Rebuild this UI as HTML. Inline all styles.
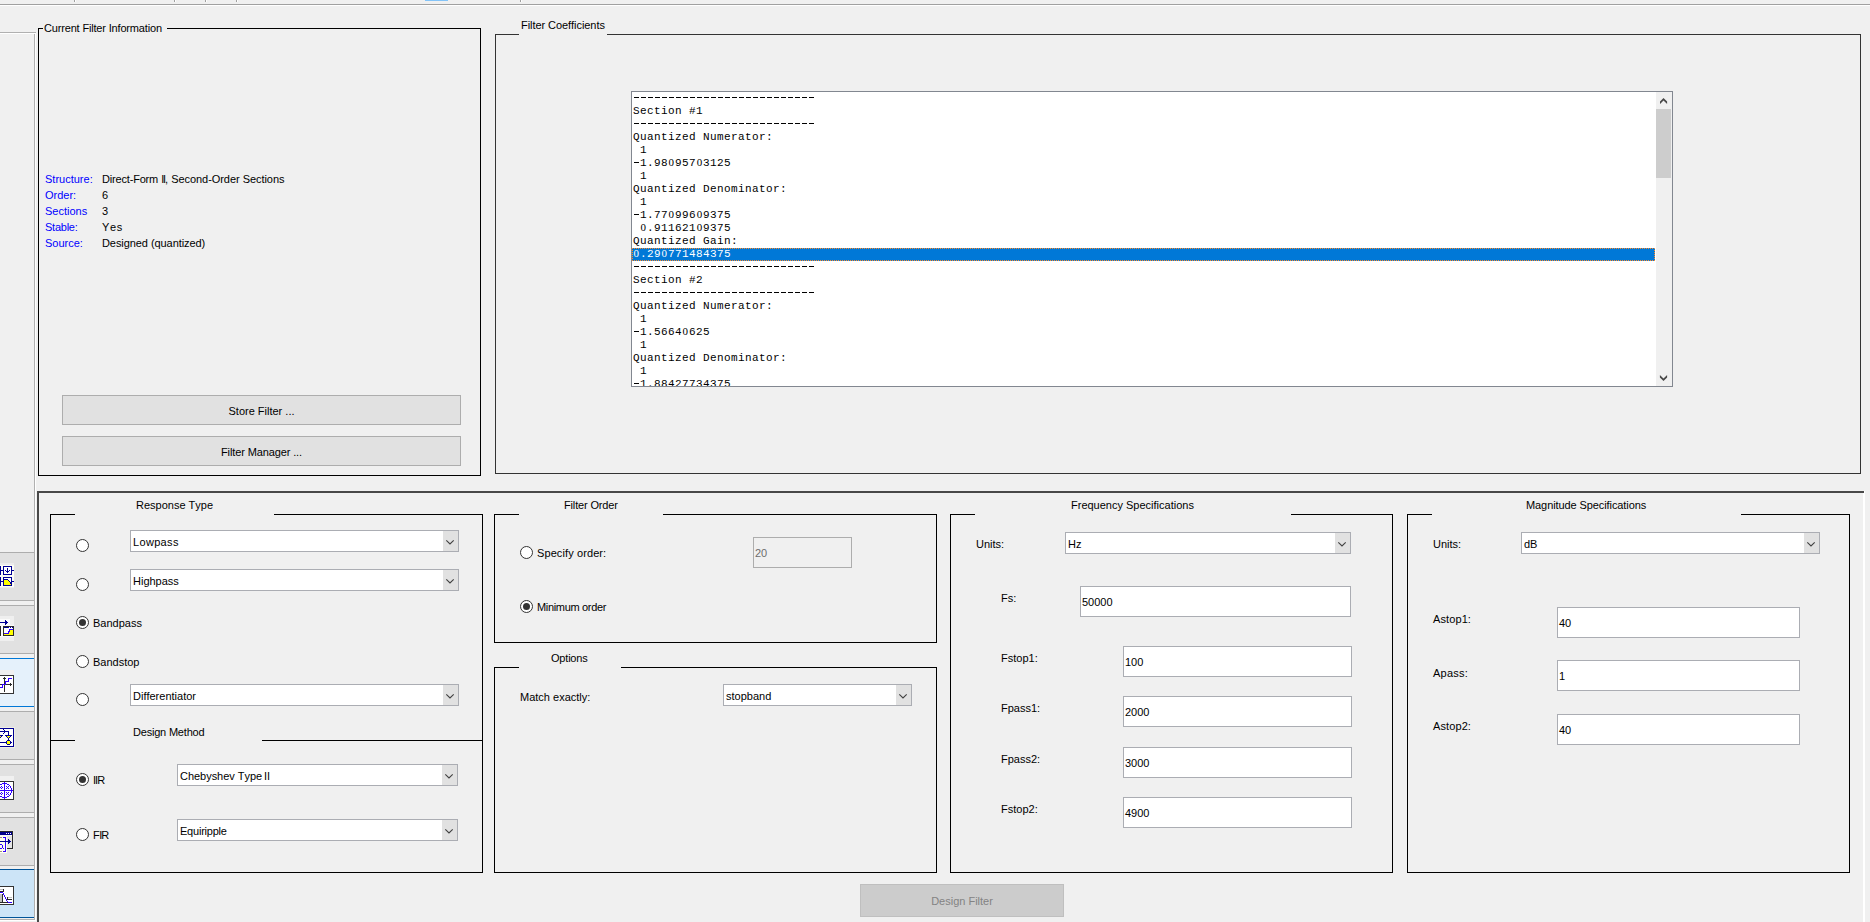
<!DOCTYPE html>
<html><head><meta charset="utf-8"><title>Filter Designer</title>
<style>
html,body{margin:0;padding:0;}
body{font-kerning:none;text-rendering:optimizeSpeed;width:1870px;height:922px;overflow:hidden;background:#f0f0f0;position:relative;font-family:"Liberation Sans",sans-serif;font-size:11px;}
body div, body svg{position:absolute;}
.t{white-space:pre;line-height:13px;height:13px;font-size:11px;}
.b{white-space:pre;font-size:11px;}
.z{font-family:"Liberation Serif",serif;font-size:11px;line-height:0;letter-spacing:0.9px;margin-left:0.6px;}
.m{white-space:pre;font-family:"Liberation Mono",monospace;font-size:11px;letter-spacing:0.4px;line-height:13px;height:13px;}
</style></head><body>
<div style="left:0px;top:4px;width:1870px;height:1px;background:#a0a0a0;"></div>
<div style="left:0px;top:5px;width:1870px;height:1px;background:#ffffff;"></div>
<div style="left:74px;top:0px;width:1px;height:2px;background:#a0a0a0;"></div>
<div style="left:75px;top:0px;width:1px;height:2px;background:#ffffff;"></div>
<div style="left:174px;top:0px;width:1px;height:2px;background:#a0a0a0;"></div>
<div style="left:175px;top:0px;width:1px;height:2px;background:#ffffff;"></div>
<div style="left:205px;top:0px;width:1px;height:2px;background:#a0a0a0;"></div>
<div style="left:206px;top:0px;width:1px;height:2px;background:#ffffff;"></div>
<div style="left:236px;top:0px;width:1px;height:2px;background:#a0a0a0;"></div>
<div style="left:237px;top:0px;width:1px;height:2px;background:#ffffff;"></div>
<div style="left:520px;top:0px;width:1px;height:2px;background:#a0a0a0;"></div>
<div style="left:521px;top:0px;width:1px;height:2px;background:#ffffff;"></div>
<div style="left:425px;top:0px;width:23px;height:1px;background:#84c4f8;"></div>
<div style="left:0px;top:32px;width:36px;height:1px;background:#b0b0b0;"></div>
<div style="left:0px;top:33px;width:36px;height:1px;background:#ffffff;"></div>
<div style="left:-2px;top:552px;width:37px;height:49px;background:#e1e1e1;border:1px solid #adadad;box-sizing:border-box;"></div>
<div style="left:-2px;top:605px;width:37px;height:49px;background:#e1e1e1;border:1px solid #adadad;box-sizing:border-box;"></div>
<div style="left:-2px;top:658px;width:37px;height:49px;background:#e5f1fb;border:1px solid #0078d7;box-sizing:border-box;"></div>
<div style="left:-2px;top:711px;width:37px;height:49px;background:#e1e1e1;border:1px solid #adadad;box-sizing:border-box;"></div>
<div style="left:-2px;top:764px;width:37px;height:49px;background:#e1e1e1;border:1px solid #adadad;box-sizing:border-box;"></div>
<div style="left:-2px;top:817px;width:37px;height:49px;background:#e1e1e1;border:1px solid #adadad;box-sizing:border-box;"></div>
<div style="left:-2px;top:869px;width:37px;height:49px;background:#cce4f7;border:1px solid #005499;box-sizing:border-box;"></div>
<div style="left:34px;top:34px;width:1px;height:886px;background:#b0b0b0;"></div>
<div style="left:35px;top:34px;width:1px;height:887px;background:#ffffff;"></div>
<div style="left:0px;top:919px;width:35px;height:1px;background:#b0b0b0;"></div>
<div style="left:0px;top:920px;width:36px;height:1px;background:#ffffff;"></div>
<svg style="left:0;top:0" width="16" height="922" viewBox="0 0 16 922" shape-rendering="crispEdges"><rect x="0" y="563" width="14" height="25" fill="#ececec"/><rect x="0" y="565" width="14" height="22" fill="#fdfdf6"/><rect x="3" y="566" width="9" height="9" fill="#000094"/><rect x="4" y="567" width="7" height="7" fill="#ffffff"/><rect x="0" y="566" width="1" height="9" fill="#000094"/><rect x="0" y="570" width="3" height="1" fill="#000094"/><rect x="12" y="570" width="2" height="1" fill="#000094"/><rect x="3" y="577" width="9" height="9" fill="#000094"/><rect x="4" y="578" width="7" height="7" fill="#ffffff"/><rect x="0" y="577" width="1" height="9" fill="#000094"/><rect x="0" y="581" width="3" height="1" fill="#000094"/><rect x="12" y="581" width="2" height="1" fill="#000094"/><rect x="7" y="568" width="1" height="5" fill="#000094"/><rect x="5" y="570" width="1" height="1" fill="#000094"/><rect x="9" y="570" width="1" height="1" fill="#000094"/><rect x="6" y="571" width="3" height="1" fill="#000094"/><rect x="4" y="579" width="4" height="1" fill="#000094"/><rect x="8" y="580" width="1" height="1" fill="#000094"/><rect x="9" y="581" width="1" height="1" fill="#000094"/><rect x="10" y="582" width="1" height="1" fill="#000094"/><rect x="10" y="583" width="1" height="1" fill="#000094"/><rect x="4" y="580" width="4" height="1" fill="#ffff00"/><rect x="4" y="581" width="5" height="1" fill="#ffff00"/><rect x="4" y="582" width="6" height="1" fill="#ffff00"/><rect x="4" y="583" width="6" height="1" fill="#ffff00"/><rect x="4" y="584" width="7" height="1" fill="#ffff00"/><rect x="0" y="616" width="14" height="25" fill="#efefef"/><rect x="0" y="619" width="10" height="7" fill="#fbfbfb"/><rect x="0" y="625" width="14" height="12" fill="#fbfbfb"/><rect x="0" y="622" width="8" height="1" fill="#000094"/><rect x="5" y="620" width="1" height="5" fill="#000094"/><rect x="6" y="621" width="1" height="3" fill="#000094"/><rect x="0" y="626" width="1" height="10" fill="#2a2a2a"/><rect x="3" y="626" width="11" height="10" fill="#2a2a2a"/><rect x="4" y="627" width="9" height="8" fill="#ffffff"/><rect x="4" y="627" width="5" height="1" fill="#000094"/><rect x="10" y="627" width="1" height="1" fill="#000094"/><rect x="12" y="627" width="1" height="1" fill="#000094"/><rect x="10" y="629" width="3" height="1" fill="#3000ff"/><rect x="9" y="629" width="1" height="3" fill="#3000ff"/><rect x="8" y="631" width="1" height="3" fill="#3000ff"/><rect x="4" y="633" width="5" height="1" fill="#3000ff"/><rect x="10" y="630" width="3" height="5" fill="#ffff00"/><rect x="9" y="632" width="1" height="3" fill="#ffff00"/><rect x="4" y="634" width="6" height="1" fill="#ffff00"/><rect x="0" y="670" width="14" height="5" fill="#f0f0f0"/><rect x="0" y="675" width="14" height="19" fill="#333333"/><rect x="0" y="676" width="13" height="17" fill="#ffffff"/><rect x="4" y="677" width="1" height="15" fill="#2a2a2a"/><rect x="3" y="678" width="3" height="1" fill="#2a2a2a"/><rect x="0" y="684" width="12" height="1" fill="#2a2a2a"/><rect x="10" y="683" width="1" height="3" fill="#2a2a2a"/><rect x="8" y="678" width="4" height="1" fill="#3000ff"/><rect x="8" y="678" width="1" height="4" fill="#3000ff"/><rect x="5" y="681" width="4" height="1" fill="#3000ff"/><rect x="5" y="681" width="1" height="4" fill="#3000ff"/><rect x="2" y="684" width="4" height="1" fill="#3000ff"/><rect x="2" y="684" width="1" height="4" fill="#3000ff"/><rect x="0" y="687" width="3" height="1" fill="#3000ff"/><rect x="0" y="727" width="15" height="21" fill="#efefe4"/><rect x="0" y="728" width="14" height="19" fill="#000094"/><rect x="0" y="729" width="13" height="17" fill="#ffffff"/><rect x="0" y="731" width="9" height="1" fill="#000094"/><rect x="8" y="731" width="1" height="5" fill="#000094"/><rect x="3" y="729" width="1" height="1" fill="#000094"/><rect x="4" y="730" width="1" height="3" fill="#000094"/><rect x="3" y="733" width="1" height="1" fill="#000094"/><rect x="5" y="735" width="7" height="1" fill="#000094"/><rect x="6" y="736" width="5" height="1" fill="#000094"/><rect x="7" y="737" width="3" height="1" fill="#000094"/><rect x="8" y="738" width="1" height="3" fill="#000094"/><rect x="7" y="736" width="3" height="1" fill="#ffff00"/><rect x="8" y="737" width="1" height="1" fill="#ffff00"/><rect x="7" y="740" width="3" height="1" fill="#000094"/><rect x="7" y="744" width="3" height="1" fill="#000094"/><rect x="6" y="741" width="1" height="3" fill="#000094"/><rect x="10" y="741" width="1" height="3" fill="#000094"/><rect x="11" y="742" width="1" height="1" fill="#000094"/><rect x="7" y="741" width="3" height="3" fill="#ffff00"/><rect x="0" y="742" width="6" height="1" fill="#000094"/><rect x="0" y="735" width="3" height="1" fill="#000094"/><rect x="0" y="736" width="2" height="1" fill="#000094"/><rect x="0" y="737" width="1" height="1" fill="#000094"/><rect x="0" y="736" width="1" height="1" fill="#ffff00"/><rect x="0" y="776" width="14" height="5" fill="#f0f0f0"/><rect x="0" y="781" width="14" height="19" fill="#333333"/><rect x="0" y="782" width="13" height="17" fill="#ffffff"/><rect x="4" y="782" width="1" height="17" fill="#3000ff"/><rect x="0" y="790" width="13" height="1" fill="#3000ff"/><rect x="5" y="783" width="1" height="1" fill="#3000ff"/><rect x="5" y="797" width="1" height="1" fill="#3000ff"/><rect x="3" y="783" width="1" height="1" fill="#3000ff"/><rect x="3" y="797" width="1" height="1" fill="#3000ff"/><rect x="6" y="783" width="1" height="1" fill="#3000ff"/><rect x="6" y="797" width="1" height="1" fill="#3000ff"/><rect x="2" y="783" width="1" height="1" fill="#3000ff"/><rect x="2" y="797" width="1" height="1" fill="#3000ff"/><rect x="7" y="784" width="1" height="1" fill="#3000ff"/><rect x="7" y="796" width="1" height="1" fill="#3000ff"/><rect x="1" y="784" width="1" height="1" fill="#3000ff"/><rect x="1" y="796" width="1" height="1" fill="#3000ff"/><rect x="8" y="784" width="1" height="1" fill="#3000ff"/><rect x="8" y="796" width="1" height="1" fill="#3000ff"/><rect x="0" y="784" width="1" height="1" fill="#3000ff"/><rect x="0" y="796" width="1" height="1" fill="#3000ff"/><rect x="9" y="785" width="1" height="1" fill="#3000ff"/><rect x="9" y="795" width="1" height="1" fill="#3000ff"/><rect x="10" y="786" width="1" height="1" fill="#3000ff"/><rect x="10" y="794" width="1" height="1" fill="#3000ff"/><rect x="10" y="787" width="1" height="1" fill="#3000ff"/><rect x="10" y="793" width="1" height="1" fill="#3000ff"/><rect x="11" y="788" width="1" height="1" fill="#3000ff"/><rect x="11" y="792" width="1" height="1" fill="#3000ff"/><rect x="11" y="789" width="1" height="1" fill="#3000ff"/><rect x="11" y="791" width="1" height="1" fill="#3000ff"/><rect x="6" y="786" width="1" height="1" fill="#3000ff"/><rect x="8" y="786" width="1" height="1" fill="#3000ff"/><rect x="7" y="787" width="1" height="1" fill="#3000ff"/><rect x="6" y="788" width="1" height="1" fill="#3000ff"/><rect x="8" y="788" width="1" height="1" fill="#3000ff"/><rect x="1" y="786" width="1" height="1" fill="#3000ff"/><rect x="0" y="787" width="1" height="1" fill="#3000ff"/><rect x="2" y="787" width="1" height="1" fill="#3000ff"/><rect x="1" y="788" width="1" height="1" fill="#3000ff"/><rect x="6" y="792" width="1" height="1" fill="#3000ff"/><rect x="8" y="792" width="1" height="1" fill="#3000ff"/><rect x="7" y="793" width="1" height="1" fill="#3000ff"/><rect x="6" y="794" width="1" height="1" fill="#3000ff"/><rect x="8" y="794" width="1" height="1" fill="#3000ff"/><rect x="1" y="792" width="1" height="1" fill="#3000ff"/><rect x="0" y="793" width="1" height="1" fill="#3000ff"/><rect x="2" y="793" width="1" height="1" fill="#3000ff"/><rect x="1" y="794" width="1" height="1" fill="#3000ff"/><rect x="0" y="830" width="14" height="20" fill="#e8e8e8"/><rect x="0" y="831" width="13" height="18" fill="#2a2a2a"/><rect x="0" y="832" width="12" height="16" fill="#e4e4e4"/><rect x="0" y="832" width="12" height="3" fill="#00008b"/><rect x="6" y="833" width="1" height="1" fill="#ffffff"/><rect x="8" y="833" width="1" height="1" fill="#ffffff"/><rect x="10" y="833" width="1" height="1" fill="#ffffff"/><rect x="0" y="835" width="12" height="1" fill="#f8f8f8"/><rect x="0" y="836" width="7" height="17" fill="#fffff0"/><rect x="3" y="837" width="3" height="1" fill="#3000ff"/><rect x="5" y="837" width="1" height="15" fill="#3000ff"/><rect x="3" y="851" width="3" height="1" fill="#3000ff"/><rect x="0" y="837" width="2" height="1" fill="#a09080"/><rect x="0" y="851" width="2" height="1" fill="#a09080"/><rect x="0" y="841" width="10" height="1" fill="#00008b"/><rect x="8" y="839" width="1" height="5" fill="#00008b"/><rect x="9" y="840" width="1" height="3" fill="#00008b"/><rect x="10" y="841" width="1" height="1" fill="#00008b"/><rect x="0" y="844" width="2" height="1" fill="#3000ff"/><rect x="2" y="845" width="1" height="3" fill="#3000ff"/><rect x="0" y="848" width="2" height="1" fill="#3000ff"/><rect x="3" y="848" width="1" height="1" fill="#3000ff"/><rect x="0" y="886" width="14" height="19" fill="#333333"/><rect x="0" y="887" width="13" height="17" fill="#ffffff"/><rect x="0" y="889" width="3" height="1" fill="#c0c0c0"/><rect x="3" y="889" width="1" height="3" fill="#2a2a2a"/><rect x="0" y="891" width="4" height="1" fill="#2a2a2a"/><rect x="0" y="892" width="3" height="1" fill="#3000ff"/><rect x="3" y="893" width="1" height="1" fill="#3000ff"/><rect x="3" y="894" width="1" height="1" fill="#3000ff"/><rect x="4" y="895" width="1" height="1" fill="#3000ff"/><rect x="4" y="896" width="1" height="1" fill="#3000ff"/><rect x="5" y="897" width="1" height="1" fill="#3000ff"/><rect x="5" y="898" width="1" height="1" fill="#3000ff"/><rect x="6" y="899" width="1" height="1" fill="#3000ff"/><rect x="6" y="900" width="1" height="1" fill="#3000ff"/><rect x="7" y="901" width="1" height="1" fill="#3000ff"/><rect x="0" y="894" width="2" height="8" fill="#c0c0c0"/><rect x="2" y="894" width="1" height="9" fill="#2a2a2a"/><rect x="0" y="902" width="8" height="1" fill="#2a2a2a"/><rect x="8" y="902" width="4" height="1" fill="#3000ff"/><rect x="8" y="897" width="4" height="1" fill="#c0c0c0"/><rect x="7" y="897" width="1" height="3" fill="#2a2a2a"/><rect x="7" y="899" width="5" height="1" fill="#2a2a2a"/></svg>
<div style="left:38px;top:28px;width:5px;height:1px;background:#000;"></div>
<div style="left:167px;top:28px;width:314px;height:1px;background:#000;"></div>
<div style="left:38px;top:475px;width:443px;height:1px;background:#000;"></div>
<div style="left:38px;top:28px;width:1px;height:448px;background:#000;"></div>
<div style="left:480px;top:28px;width:1px;height:448px;background:#000;"></div>
<div class="t" style="left:44px;top:22px;color:#000;letter-spacing:-0.17px;">Current Filter Information</div>
<div class="t" style="left:45px;top:173px;color:#0000ff;">Structure:</div>
<div class="t" style="left:102px;top:173px;color:#000;"><span style="letter-spacing:-0.18px">Direct-Form</span> <span style="letter-spacing:-1.1px">II</span>,<span style="letter-spacing:-0.05px"> Second-Order Sections</span></div>
<div class="t" style="left:45px;top:189px;color:#0000ff;">Order:</div>
<div class="t" style="left:102px;top:189px;color:#000;">6</div>
<div class="t" style="left:45px;top:205px;color:#0000ff;">Sections</div>
<div class="t" style="left:102px;top:205px;color:#000;">3</div>
<div class="t" style="left:45px;top:221px;color:#0000ff;"><span style="letter-spacing:-0.25px">Stable:</span></div>
<div class="t" style="left:102px;top:221px;color:#000;"><span style="letter-spacing:0.6px">Yes</span></div>
<div class="t" style="left:45px;top:237px;color:#0000ff;">Source:</div>
<div class="t" style="left:102px;top:237px;color:#000;"><span style="letter-spacing:-0.07px">Designed (quantized)</span></div>
<div class="b" style="left:62px;top:395px;width:399px;height:30px;background:#e1e1e1;border:1px solid #adadad;box-sizing:border-box;color:#000;text-align:center;line-height:30px;">Store Filter ...</div>
<div class="b" style="left:62px;top:436px;width:399px;height:30px;background:#e1e1e1;border:1px solid #adadad;box-sizing:border-box;color:#000;text-align:center;line-height:30px;letter-spacing:-0.12px;">Filter Manager ...</div>
<div style="left:495px;top:34px;width:24px;height:1px;background:#333;"></div>
<div style="left:607px;top:34px;width:1254px;height:1px;background:#333;"></div>
<div style="left:495px;top:473px;width:1366px;height:1px;background:#333;"></div>
<div style="left:495px;top:34px;width:1px;height:440px;background:#333;"></div>
<div style="left:1860px;top:34px;width:1px;height:440px;background:#333;"></div>
<div class="t" style="left:521px;top:19px;color:#000;letter-spacing:-0.06px;">Filter Coefficients</div>
<div style="left:631px;top:91px;width:1042px;height:296px;background:#fff;border:1px solid #828790;box-sizing:border-box;"></div>
<div style="left:632px;top:92px;width:1024px;height:294px;overflow:hidden;">
<div style="left:1px;top:5px;width:182px;height:1px;background:repeating-linear-gradient(90deg,rgba(0,0,0,0) 0,rgba(0,0,0,0) 0.7px,#000 0.7px,#000 6.3px,rgba(0,0,0,0) 6.3px,rgba(0,0,0,0) 7px);"></div>
<div class="m" style="left:1px;top:13px;">Section #1</div>
<div style="left:1px;top:31px;width:182px;height:1px;background:repeating-linear-gradient(90deg,rgba(0,0,0,0) 0,rgba(0,0,0,0) 0.7px,#000 0.7px,#000 6.3px,rgba(0,0,0,0) 6.3px,rgba(0,0,0,0) 7px);"></div>
<div class="m" style="left:1px;top:39px;">Quantized Numerator:</div>
<div class="m" style="left:1px;top:52px;"> 1</div>
<div style="left:1.7px;top:70px;width:5.6px;height:1px;background:#000;"></div>
<div class="m" style="left:1px;top:65px;"> 1.98<span class="z">0</span>957<span class="z">0</span>3125</div>
<div class="m" style="left:1px;top:78px;"> 1</div>
<div class="m" style="left:1px;top:91px;">Quantized Denominator:</div>
<div class="m" style="left:1px;top:104px;"> 1</div>
<div style="left:1.7px;top:122px;width:5.6px;height:1px;background:#000;"></div>
<div class="m" style="left:1px;top:117px;"> 1.77<span class="z">0</span>996<span class="z">0</span>9375</div>
<div class="m" style="left:1px;top:130px;"> <span class="z">0</span>.911621<span class="z">0</span>9375</div>
<div class="m" style="left:1px;top:143px;">Quantized Gain:</div>
<div style="left:0;top:156px;width:1023px;height:13px;background:#0078d7;"></div>
<div style="left:0;top:156px;width:1023px;height:13px;box-sizing:border-box;border:1px dotted #ff8a28;"></div>
<div class="m" style="left:1px;top:156px;color:#fff;"><span class="z">0</span>.29<span class="z">0</span>771484375</div>
<div style="left:1px;top:174px;width:182px;height:1px;background:repeating-linear-gradient(90deg,rgba(0,0,0,0) 0,rgba(0,0,0,0) 0.7px,#000 0.7px,#000 6.3px,rgba(0,0,0,0) 6.3px,rgba(0,0,0,0) 7px);"></div>
<div class="m" style="left:1px;top:182px;">Section #2</div>
<div style="left:1px;top:200px;width:182px;height:1px;background:repeating-linear-gradient(90deg,rgba(0,0,0,0) 0,rgba(0,0,0,0) 0.7px,#000 0.7px,#000 6.3px,rgba(0,0,0,0) 6.3px,rgba(0,0,0,0) 7px);"></div>
<div class="m" style="left:1px;top:208px;">Quantized Numerator:</div>
<div class="m" style="left:1px;top:221px;"> 1</div>
<div style="left:1.7px;top:239px;width:5.6px;height:1px;background:#000;"></div>
<div class="m" style="left:1px;top:234px;"> 1.5664<span class="z">0</span>625</div>
<div class="m" style="left:1px;top:247px;"> 1</div>
<div class="m" style="left:1px;top:260px;">Quantized Denominator:</div>
<div class="m" style="left:1px;top:273px;"> 1</div>
<div style="left:1.7px;top:291px;width:5.6px;height:1px;background:#000;"></div>
<div class="m" style="left:1px;top:286px;"> 1.88427734375</div>
</div>
<div style="left:1656px;top:92px;width:16px;height:294px;background:#f0f0f0;"></div>
<div style="left:1656px;top:109px;width:15px;height:69px;background:#cdcdcd;"></div>
<svg style="left:1656px;top:92px" width="16" height="20" viewBox="0 0 16 20"><path d="M4 9.4 L7.5 5.9 L11.1 9.4 L11.1 12 L7.5 8.5 L4 12 Z" fill="#484848"/></svg>
<svg style="left:1656px;top:368px" width="16" height="18" viewBox="0 0 16 18"><path d="M3.9 6.9 L7.5 10.5 L11.1 6.9 L11.1 9.5 L7.5 13.1 L3.9 9.5 Z" fill="#484848"/></svg>
<div style="left:37px;top:491px;width:1827px;height:2px;background:#484848;"></div>
<div style="left:1864px;top:491px;width:1px;height:431px;background:#ffffff;"></div>
<div style="left:37px;top:491px;width:2px;height:431px;background:#484848;"></div>
<div style="left:1863px;top:493px;width:2px;height:429px;background:#ffffff;"></div>
<div style="left:50px;top:514px;width:25px;height:1px;background:#000;"></div>
<div style="left:274px;top:514px;width:209px;height:1px;background:#000;"></div>
<div style="left:50px;top:872px;width:433px;height:1px;background:#000;"></div>
<div style="left:50px;top:514px;width:1px;height:359px;background:#000;"></div>
<div style="left:482px;top:514px;width:1px;height:359px;background:#000;"></div>
<div class="t" style="left:136px;top:499px;color:#000;">Response Type</div>
<svg style="left:76.0px;top:539.0px" width="13" height="13" viewBox="0 0 13 13"><circle cx="6.5" cy="6.5" r="6" fill="#fff" stroke="#333" stroke-width="1"/></svg>
<svg style="left:76.0px;top:578.0px" width="13" height="13" viewBox="0 0 13 13"><circle cx="6.5" cy="6.5" r="6" fill="#fff" stroke="#333" stroke-width="1"/></svg>
<svg style="left:76.0px;top:693.0px" width="13" height="13" viewBox="0 0 13 13"><circle cx="6.5" cy="6.5" r="6" fill="#fff" stroke="#333" stroke-width="1"/></svg>
<svg style="left:76.0px;top:616.0px" width="13" height="13" viewBox="0 0 13 13"><circle cx="6.5" cy="6.5" r="6" fill="#fff" stroke="#333" stroke-width="1"/><circle cx="6.5" cy="6.5" r="3.5" fill="#333"/></svg>
<svg style="left:76.0px;top:655.0px" width="13" height="13" viewBox="0 0 13 13"><circle cx="6.5" cy="6.5" r="6" fill="#fff" stroke="#333" stroke-width="1"/></svg>
<div class="t" style="left:93px;top:617px;color:#000;">Bandpass</div>
<div class="t" style="left:93px;top:656px;color:#000;">Bandstop</div>
<div style="left:130px;top:530px;width:329px;height:22px;background:#fff;border:1px solid #abadb3;box-sizing:border-box;"></div>
<div style="left:443px;top:531px;width:15px;height:20px;background:#e1e1e1;"></div>
<svg style="left:445px;top:537.5px" width="10" height="8" viewBox="0 0 10 8"><path d="M1.3 2.4 L5 6.0 L8.7 2.4" fill="none" stroke="#404040" stroke-width="1.1"/></svg>
<div class="t" style="left:133px;top:536px;color:#000;letter-spacing:0.33px;">Lowpass</div>
<div style="left:130px;top:569px;width:329px;height:22px;background:#fff;border:1px solid #abadb3;box-sizing:border-box;"></div>
<div style="left:443px;top:570px;width:15px;height:20px;background:#e1e1e1;"></div>
<svg style="left:445px;top:576.5px" width="10" height="8" viewBox="0 0 10 8"><path d="M1.3 2.4 L5 6.0 L8.7 2.4" fill="none" stroke="#404040" stroke-width="1.1"/></svg>
<div class="t" style="left:133px;top:575px;color:#000;">Highpass</div>
<div style="left:130px;top:684px;width:329px;height:22px;background:#fff;border:1px solid #abadb3;box-sizing:border-box;"></div>
<div style="left:443px;top:685px;width:15px;height:20px;background:#e1e1e1;"></div>
<svg style="left:445px;top:691.5px" width="10" height="8" viewBox="0 0 10 8"><path d="M1.3 2.4 L5 6.0 L8.7 2.4" fill="none" stroke="#404040" stroke-width="1.1"/></svg>
<div class="t" style="left:133px;top:690px;color:#000;">Differentiator</div>
<div style="left:50px;top:740px;width:25px;height:1px;background:#000;"></div>
<div style="left:262px;top:740px;width:221px;height:1px;background:#000;"></div>
<div class="t" style="left:133px;top:726px;color:#000;letter-spacing:-0.2px;">Design Method</div>
<svg style="left:76.0px;top:773.0px" width="13" height="13" viewBox="0 0 13 13"><circle cx="6.5" cy="6.5" r="6" fill="#fff" stroke="#333" stroke-width="1"/><circle cx="6.5" cy="6.5" r="3.5" fill="#333"/></svg>
<svg style="left:76.0px;top:828.0px" width="13" height="13" viewBox="0 0 13 13"><circle cx="6.5" cy="6.5" r="6" fill="#fff" stroke="#333" stroke-width="1"/></svg>
<div class="t" style="left:93px;top:774px;color:#000;"><span style="letter-spacing:-1px">II</span>R</div>
<div class="t" style="left:93px;top:829px;color:#000;letter-spacing:-0.5px;">F<span style="letter-spacing:-1px">I</span>R</div>
<div style="left:177px;top:764px;width:281px;height:22px;background:#fff;border:1px solid #abadb3;box-sizing:border-box;"></div>
<div style="left:442px;top:765px;width:15px;height:20px;background:#e1e1e1;"></div>
<svg style="left:444px;top:771.5px" width="10" height="8" viewBox="0 0 10 8"><path d="M1.3 2.4 L5 6.0 L8.7 2.4" fill="none" stroke="#404040" stroke-width="1.1"/></svg>
<div class="t" style="left:180px;top:770px;color:#000;letter-spacing:-0.03px;">Chebyshev Type<span style="letter-spacing:-1.2px"> </span>II</div>
<div style="left:177px;top:819px;width:281px;height:22px;background:#fff;border:1px solid #abadb3;box-sizing:border-box;"></div>
<div style="left:442px;top:820px;width:15px;height:20px;background:#e1e1e1;"></div>
<svg style="left:444px;top:826.5px" width="10" height="8" viewBox="0 0 10 8"><path d="M1.3 2.4 L5 6.0 L8.7 2.4" fill="none" stroke="#404040" stroke-width="1.1"/></svg>
<div class="t" style="left:180px;top:825px;color:#000;letter-spacing:-0.22px;">Equiripple</div>
<div style="left:494px;top:514px;width:25px;height:1px;background:#000;"></div>
<div style="left:663px;top:514px;width:274px;height:1px;background:#000;"></div>
<div style="left:494px;top:642px;width:443px;height:1px;background:#000;"></div>
<div style="left:494px;top:514px;width:1px;height:129px;background:#000;"></div>
<div style="left:936px;top:514px;width:1px;height:129px;background:#000;"></div>
<div class="t" style="left:564px;top:499px;color:#000;letter-spacing:-0.15px;">Filter Order</div>
<svg style="left:520.0px;top:546.0px" width="13" height="13" viewBox="0 0 13 13"><circle cx="6.5" cy="6.5" r="6" fill="#fff" stroke="#333" stroke-width="1"/></svg>
<svg style="left:520.0px;top:600.0px" width="13" height="13" viewBox="0 0 13 13"><circle cx="6.5" cy="6.5" r="6" fill="#fff" stroke="#333" stroke-width="1"/><circle cx="6.5" cy="6.5" r="3.5" fill="#333"/></svg>
<div class="t" style="left:537px;top:547px;color:#000;letter-spacing:0.1px;">Specify order:</div>
<div class="t" style="left:537px;top:601px;color:#000;letter-spacing:-0.33px;">Minimum order</div>
<div style="left:753px;top:537px;width:99px;height:31px;background:#f0f0f0;border:1px solid #adadad;box-sizing:border-box;"></div>
<div class="t" style="left:755px;top:547px;color:#6d6d6d;">20</div>
<div style="left:494px;top:667px;width:25px;height:1px;background:#000;"></div>
<div style="left:621px;top:667px;width:316px;height:1px;background:#000;"></div>
<div style="left:494px;top:872px;width:443px;height:1px;background:#000;"></div>
<div style="left:494px;top:667px;width:1px;height:206px;background:#000;"></div>
<div style="left:936px;top:667px;width:1px;height:206px;background:#000;"></div>
<div class="t" style="left:551px;top:652px;color:#000;letter-spacing:-0.2px;">Options</div>
<div class="t" style="left:520px;top:691px;color:#000;">Match exactly:</div>
<div style="left:723px;top:684px;width:189px;height:22px;background:#fff;border:1px solid #abadb3;box-sizing:border-box;"></div>
<div style="left:896px;top:685px;width:15px;height:20px;background:#e1e1e1;"></div>
<svg style="left:898px;top:691.5px" width="10" height="8" viewBox="0 0 10 8"><path d="M1.3 2.4 L5 6.0 L8.7 2.4" fill="none" stroke="#404040" stroke-width="1.1"/></svg>
<div class="t" style="left:726px;top:690px;color:#000;">stopband</div>
<div style="left:950px;top:514px;width:25px;height:1px;background:#000;"></div>
<div style="left:1291px;top:514px;width:102px;height:1px;background:#000;"></div>
<div style="left:950px;top:872px;width:443px;height:1px;background:#000;"></div>
<div style="left:950px;top:514px;width:1px;height:359px;background:#000;"></div>
<div style="left:1392px;top:514px;width:1px;height:359px;background:#000;"></div>
<div class="t" style="left:1071px;top:499px;color:#000;">Frequency Specifications</div>
<div class="t" style="left:976px;top:538px;color:#000;">Units:</div>
<div style="left:1065px;top:532px;width:286px;height:22px;background:#fff;border:1px solid #abadb3;box-sizing:border-box;"></div>
<div style="left:1335px;top:533px;width:15px;height:20px;background:#e1e1e1;"></div>
<svg style="left:1337px;top:539.5px" width="10" height="8" viewBox="0 0 10 8"><path d="M1.3 2.4 L5 6.0 L8.7 2.4" fill="none" stroke="#404040" stroke-width="1.1"/></svg>
<div class="t" style="left:1068px;top:538px;color:#000;">Hz</div>
<div class="t" style="left:1001px;top:592px;color:#000;">Fs:</div>
<div style="left:1080px;top:586px;width:271px;height:31px;background:#fff;border:1px solid #abadb3;box-sizing:border-box;"></div>
<div class="t" style="left:1082px;top:596px;color:#000;">50000</div>
<div class="t" style="left:1001px;top:652px;color:#000;">Fstop1:</div>
<div style="left:1123px;top:646px;width:229px;height:31px;background:#fff;border:1px solid #abadb3;box-sizing:border-box;"></div>
<div class="t" style="left:1125px;top:656px;color:#000;">100</div>
<div class="t" style="left:1001px;top:702px;color:#000;">Fpass1:</div>
<div style="left:1123px;top:696px;width:229px;height:31px;background:#fff;border:1px solid #abadb3;box-sizing:border-box;"></div>
<div class="t" style="left:1125px;top:706px;color:#000;">2000</div>
<div class="t" style="left:1001px;top:753px;color:#000;">Fpass2:</div>
<div style="left:1123px;top:747px;width:229px;height:31px;background:#fff;border:1px solid #abadb3;box-sizing:border-box;"></div>
<div class="t" style="left:1125px;top:757px;color:#000;">3000</div>
<div class="t" style="left:1001px;top:803px;color:#000;">Fstop2:</div>
<div style="left:1123px;top:797px;width:229px;height:31px;background:#fff;border:1px solid #abadb3;box-sizing:border-box;"></div>
<div class="t" style="left:1125px;top:807px;color:#000;">4900</div>
<div style="left:1407px;top:514px;width:25px;height:1px;background:#000;"></div>
<div style="left:1741px;top:514px;width:109px;height:1px;background:#000;"></div>
<div style="left:1407px;top:872px;width:443px;height:1px;background:#000;"></div>
<div style="left:1407px;top:514px;width:1px;height:359px;background:#000;"></div>
<div style="left:1849px;top:514px;width:1px;height:359px;background:#000;"></div>
<div class="t" style="left:1526px;top:499px;color:#000;letter-spacing:-0.09px;">Magnitude Specifications</div>
<div class="t" style="left:1433px;top:538px;color:#000;">Units:</div>
<div style="left:1521px;top:532px;width:299px;height:22px;background:#fff;border:1px solid #abadb3;box-sizing:border-box;"></div>
<div style="left:1804px;top:533px;width:15px;height:20px;background:#e1e1e1;"></div>
<svg style="left:1806px;top:539.5px" width="10" height="8" viewBox="0 0 10 8"><path d="M1.3 2.4 L5 6.0 L8.7 2.4" fill="none" stroke="#404040" stroke-width="1.1"/></svg>
<div class="t" style="left:1524px;top:538px;color:#000;">dB</div>
<div class="t" style="left:1433px;top:613px;color:#000;letter-spacing:0.1px;">Astop1:</div>
<div style="left:1557px;top:607px;width:243px;height:31px;background:#fff;border:1px solid #abadb3;box-sizing:border-box;"></div>
<div class="t" style="left:1559px;top:617px;color:#000;">40</div>
<div class="t" style="left:1433px;top:667px;color:#000;letter-spacing:0.25px;">Apass:</div>
<div style="left:1557px;top:660px;width:243px;height:31px;background:#fff;border:1px solid #abadb3;box-sizing:border-box;"></div>
<div class="t" style="left:1559px;top:670px;color:#000;">1</div>
<div class="t" style="left:1433px;top:720px;color:#000;letter-spacing:0.1px;">Astop2:</div>
<div style="left:1557px;top:714px;width:243px;height:31px;background:#fff;border:1px solid #abadb3;box-sizing:border-box;"></div>
<div class="t" style="left:1559px;top:724px;color:#000;">40</div>
<div class="b" style="left:860px;top:884px;width:204px;height:33px;background:#cccccc;border:1px solid #bfbfbf;box-sizing:border-box;color:#838383;text-align:center;line-height:33px;">Design Filter</div>
</body></html>
